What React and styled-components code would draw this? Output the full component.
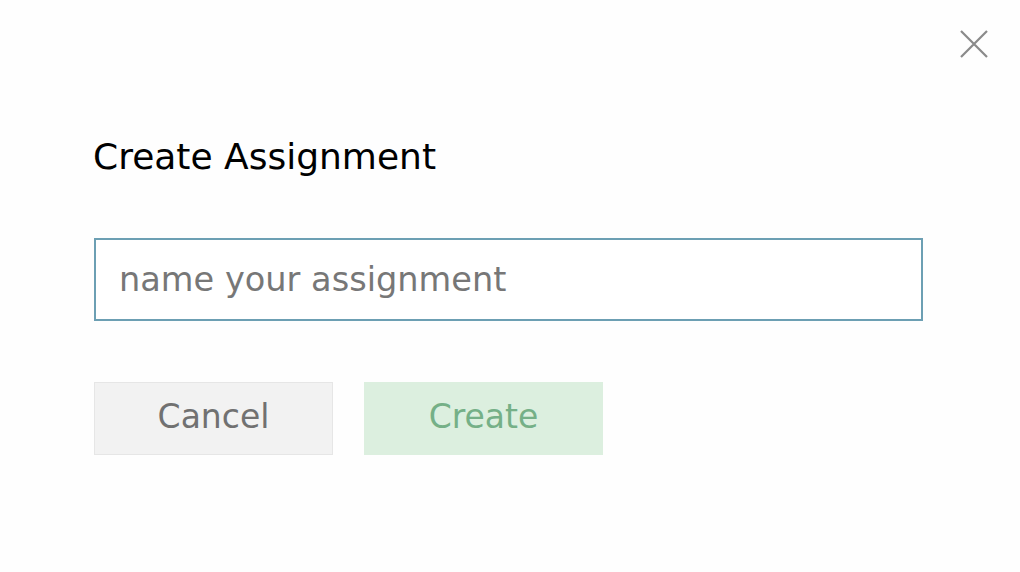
import React from 'react';
import styled, { createGlobalStyle } from 'styled-components';

const GlobalStyle = createGlobalStyle`
    html, body {
        margin: 0;
        padding: 0;
        background: #fefefe;
    }
    * {
        box-sizing: border-box;
    }
`

const PAGE = styled.div`
    width: 1020px;
    height: 572px;
    background-color: #fefefe;
    font-family: "DejaVu Sans", Verdana, sans-serif;
    display: flex;
    flex-direction: column;
`

const TOP_BAR = styled.div`
    display: flex;
    justify-content: flex-end;
    padding: 28px 30px 0 0;
`

const CLOSE_BUTTON = styled.button`
    width: 32px;
    height: 32px;
    padding: 0;
    border: none;
    background: transparent;
    cursor: pointer;
    display: flex;
    align-items: center;
    justify-content: center;
`

const CONTENT = styled.div`
    display: flex;
    flex-direction: column;
    padding: 0 0 0 94px;
    width: 923px;
`

const TITLE = styled.h2`
    margin: 75px 0 0 -1px;
    font-size: 36px;
    line-height: 44px;
    font-weight: 400;
    color: #000;
`

const NAME_INPUT = styled.input`
    margin-top: 59px;
    width: 829px;
    height: 83px;
    border: 2px solid #6c9fb3;
    border-radius: 0;
    padding: 0 23px;
    font-family: inherit;
    font-size: 33.6px;
    color: #333;
    background: #fff;
    outline: none;

    &::placeholder {
        color: #777;
    }
`

const BUTTON_ROW = styled.div`
    display: flex;
    gap: 31px;
    margin-top: 61px;
`

const ACTION_BUTTON = styled.button`
    width: 239px;
    height: 73px;
    border: 1px solid ${props => props.$primary ? '#dcefdf' : '#e6e6e6'};
    background-color: ${props => props.$primary ? '#dcefdf' : '#f2f2f2'};
    color: ${props => props.$primary ? '#75b087' : '#717171'};
    font-family: inherit;
    font-size: 33px;
    cursor: pointer;
    padding: 0 0 5px;
`

const App = () => {
    return (
        <PAGE>
            <GlobalStyle />
            <TOP_BAR>
                <CLOSE_BUTTON aria-label="Close">
                    <svg width="30" height="30" viewBox="0 0 30 30">
                        <path d="M2 2 L28 28 M28 2 L2 28" stroke="#8a8a8a" strokeWidth="2.2" fill="none" />
                    </svg>
                </CLOSE_BUTTON>
            </TOP_BAR>

            <CONTENT>
                <TITLE>Create Assignment</TITLE>
                <NAME_INPUT placeholder="name your assignment" />
                <BUTTON_ROW>
                    <ACTION_BUTTON>Cancel</ACTION_BUTTON>
                    <ACTION_BUTTON $primary>Create</ACTION_BUTTON>
                </BUTTON_ROW>
            </CONTENT>
        </PAGE>
    )
}

export default App;
